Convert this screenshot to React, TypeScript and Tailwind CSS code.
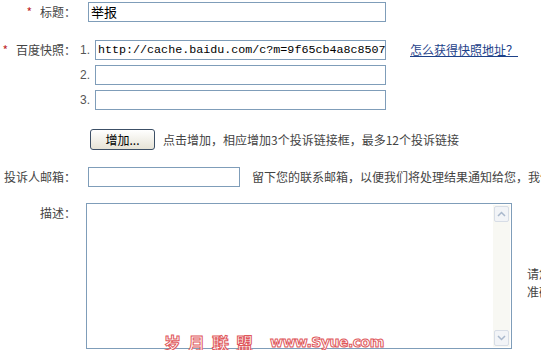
import React from "react";

const cjk = "font-['Noto_Sans_CJK_SC',sans-serif]";

const Label = ({ star, children }: { star?: boolean; children: React.ReactNode }) => (
  <div className="w-[76px] shrink-0 text-right text-[12px] leading-[20px] text-[#444] whitespace-nowrap">
    {star && <span className="text-[#c0282d] mr-[8px]">*</span>}
    {children}
  </div>
);

const Field = ({ className, value }: { className: string; value?: string }) => (
  <div
    className={`h-[20px] shrink-0 border border-[#7f9db9] bg-white overflow-hidden whitespace-nowrap ${className}`}
  >
    {value}
  </div>
);

export default function App() {
  return (
    <div className={`relative w-[541px] h-[350px] overflow-hidden bg-white ${cjk}`}>
      <div className="flex flex-col pt-[2px]">
        {/* title */}
        <div className="flex items-start">
          <Label star>标题：</Label>
          <Field
            className="ml-[12px] w-[298px] pl-[2px] text-[13px] leading-[18px] text-black"
            value="举报"
          />
        </div>

        {/* snapshot links */}
        <div className="flex items-start mt-[18px]">
          <Label star>百度快照：</Label>
          <div className="flex flex-col gap-[5px] ml-[4px]">
            {["1.", "2.", "3."].map((n, i) => (
              <div key={n} className="flex items-center">
                <span className="w-[15px] text-[12px] text-[#555] leading-[20px] font-['Liberation_Sans',sans-serif]">
                  {n}
                </span>
                <Field
                  className="w-[291px] pl-[2px] text-[11.7px] leading-[18px] text-black font-['Liberation_Mono',monospace]"
                  value={i === 0 ? "http://cache.baidu.com/c?m=9f65cb4a8c8507" : ""}
                />
              </div>
            ))}
          </div>
          <a className="ml-[24px] text-[12px] leading-[20px] text-[#1d4189] underline whitespace-nowrap">
            怎么获得快照地址？
          </a>
        </div>

        {/* add button */}
        <div className="flex items-center mt-[19px] pl-[90px]">
          <button className="h-[21px] w-[65px] shrink-0 rounded-[3px] border border-[#3c4f66] bg-gradient-to-b from-white to-[#e6e3d6] text-[12px] leading-[18px] text-black">
            增加...
          </button>
          <span className="ml-[8px] text-[12px] text-[#444] whitespace-nowrap">
            点击增加，相应增加3个投诉链接框，最多12个投诉链接
          </span>
        </div>

        {/* email */}
        <div className="flex items-start mt-[17px]">
          <Label>投诉人邮箱：</Label>
          <Field className="ml-[12px] w-[152px]" />
          <span className="ml-[12px] text-[12px] leading-[20px] text-[#444] whitespace-nowrap">
            留下您的联系邮箱，以便我们将处理结果通知给您，我们会严格保密
          </span>
        </div>

        {/* description */}
        <div className="flex items-start mt-[16px]">
          <Label>描述：</Label>
          <div className="ml-[10px] w-[426px] h-[146px] shrink-0 border border-[#7f9db9] bg-white flex justify-end p-[1px]">
            <div className="w-[17px] h-full bg-[#f8f8f3] flex flex-col justify-between">
              <div className="h-[16px] mx-[1px] mt-[1px] rounded-[2px] border border-[#d7dde6] bg-[#f2f4f7] flex items-center justify-center">
                <svg width="9" height="6" viewBox="0 0 9 6">
                  <path d="M1 5 L4.5 1.5 L8 5" fill="none" stroke="#a9b8cc" strokeWidth="1.5" />
                </svg>
              </div>
              <div className="h-[16px] mx-[1px] mb-[1px] rounded-[2px] border border-[#d7dde6] bg-[#f2f4f7] flex items-center justify-center">
                <svg width="9" height="6" viewBox="0 0 9 6">
                  <path d="M1 1 L4.5 4.5 L8 1" fill="none" stroke="#a9b8cc" strokeWidth="1.5" />
                </svg>
              </div>
            </div>
          </div>
          <div className="ml-[15px] mt-[62px] text-[12px] leading-[18px] text-[#444] whitespace-nowrap">
            <div>请您尽量详细描述</div>
            <div>准确的投诉理由</div>
          </div>
        </div>
      </div>

      {/* watermark */}
      <div className="absolute left-[164px] top-[330px] flex items-center text-white [-webkit-text-stroke:1px_#e0575b] font-bold">
        <span className="text-[17px] tracking-[7px]">岁月联盟</span>
        <span className="ml-[10px] text-[14px] font-['DejaVu_Sans',sans-serif] tracking-[-0.5px]">
          www.Syue.com
        </span>
      </div>
    </div>
  );
}
